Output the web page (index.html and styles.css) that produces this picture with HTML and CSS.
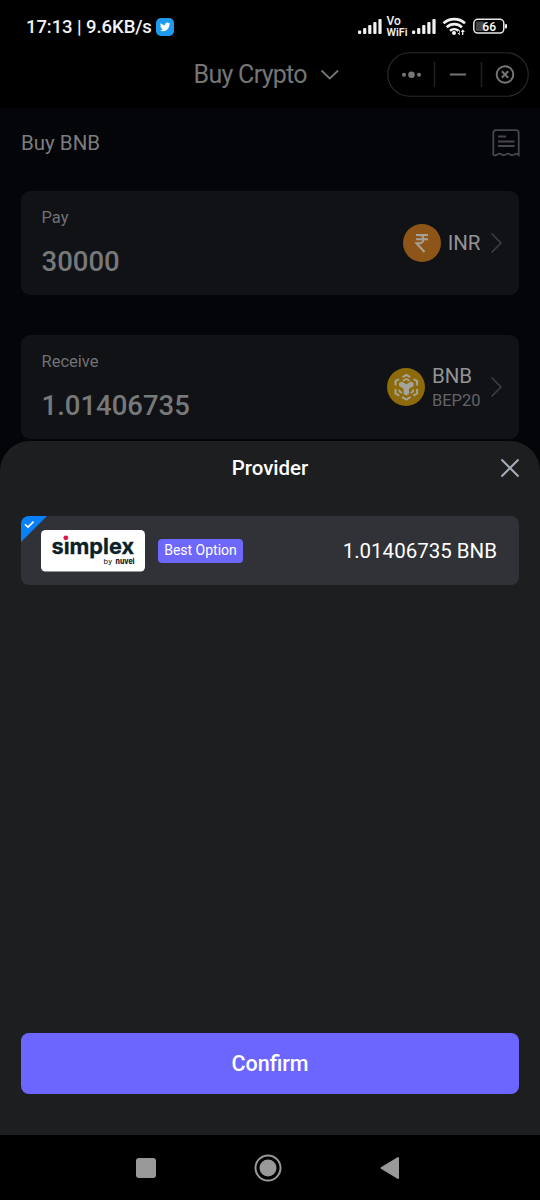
FILE: index.html
```html
<!DOCTYPE html>
<html lang="en">
<head>
<meta charset="utf-8">
<title>Buy Crypto</title>
<link rel="stylesheet" href="styles.css">
</head>
<body>
<div class="screen">
  <header class="status">
    <span class="clock">17:13 | 9.6KB/s</span>
    <svg class="bird" width="18" height="18" viewBox="0 0 18 18"><rect width="18" height="18" rx="5" fill="#1d9bf0"/><path transform="translate(4 3.500) scale(.44)" fill="#fff" d="M23.600 4.900c-.9.400-1.800.600-2.800.8 1-.6 1.800-1.600 2.100-2.700-.9.600-2 1-3.100 1.200a4.900 4.900 0 0 0-8.400 4.500C7.400 8.500 3.700 6.500 1.300 3.500a4.900 4.900 0 0 0 1.500 6.500c-.8 0-1.600-.2-2.200-.6 0 2.300 1.600 4.400 3.900 4.900-.7.200-1.500.2-2.200.1.600 2 2.400 3.400 4.600 3.400A9.900 9.900 0 0 1-.4 19.800a14 14 0 0 0 7.500 2.200c9.100 0 14.300-7.700 14-14.600 1-.7 1.800-1.600 2.500-2.500z"/></svg>
    <svg class="signals" width="150" height="26" viewBox="0 -2 150 26" fill="#f2f2f2">
      <g id="bars"><rect x="0" y="14.500" width="3.200" height="3.500" rx="1"/><rect x="5.100" y="12" width="3.200" height="6" rx="1"/><rect x="10.200" y="9" width="3.200" height="9" rx="1"/><rect x="15.300" y="6" width="3.200" height="12" rx="1"/><rect x="20.400" y="3" width="3.200" height="15" rx="1"/></g>
      <text class="vo" x="28.500" y="9">Vo</text><text class="wifi" x="28.500" y="19.500" textLength="21" lengthAdjust="spacingAndGlyphs">WiFi</text>
      <use href="#bars" x="54"/>
      <g fill="none" stroke="#f2f2f2" stroke-width="2.600"><path d="M85.500 7.300a16 16 0 0 1 21.500 0M88.700 11.200a11 11 0 0 1 15.200 0M92 14.800a6.500 6.500 0 0 1 8.500 0"/></g>
      <circle cx="96" cy="17" r="2"/><path d="M101 14v3h-1.500l2.200 2.500V14zM104 19v-3h-1.200l2-2.700 2 2.700h-1.500v3z"/>
      <rect x="115.800" y="3.300" width="30" height="13.800" rx="4" fill="none" stroke="#e8e8e8" stroke-width="1.500"/>
      <rect x="118" y="5.500" width="8" height="9.500" rx="1" fill="#444"/><rect x="147" y="8" width="2" height="4.500" rx="1"/>
      <text class="battery" x="124.300" y="14.500">66</text>
    </svg>
  </header>
  <div class="appbar">
    <h1>Buy Crypto</h1>
    <svg class="down" width="20" height="12" viewBox="0 0 20 12"><path d="m1.500 1.500 8.300 8 8.300-8"/></svg>
    <svg class="capsule" width="142" height="45" viewBox="0 0 142 45">
      <rect x=".75" y=".75" width="140.500" height="43.500" rx="21.700" fill="none" stroke="#292929" stroke-width="1.200"/>
      <path d="M47.500 10v25M94.500 10v25" stroke="#202020" stroke-width="1.500"/>
      <g fill="#777"><circle cx="17" cy="22.700" r="2"/><circle cx="24.500" cy="22.700" r="3.300"/><circle cx="32" cy="22.700" r="2"/></g>
      <g fill="none" stroke="#757575" stroke-width="2"><path d="M63 22.500h16"/><circle cx="118" cy="22.500" r="8.300"/><path d="m114.800 19.300 6.400 6.400m0-6.400-6.400 6.400"/></g>
    </svg>
  </div>
  <main class="content">
    <div class="heading"><h2>Buy BNB</h2>
      <svg width="28" height="28" viewBox="0 0 28 28"><path d="M1.300 26V4Q1.300 1.200 4 1.200h20q2.700 0 2.700 2.800v22q-2.200-2-4.300-.6-2 1.500-4.200 0-2.200-1.500-4.300 0-2 1.500-4.200 0-2.200-1.500-4.300 0-2 1.300-4.300.6zM6 7.500h8M6 12.500h16.500M6 17h16.500"/></svg>
    </div>
    <section class="amount">
      <div><p>Pay</p><strong>30000</strong></div>
      <div class="asset"><svg width="38" height="38" viewBox="0 0 38 38"><circle cx="19" cy="19" r="19" fill="#8e5518"/><path d="M13 11h12M13 15.200h12M13.500 11h2.500c6 0 6 8.300 0 8.300h-2.500L21.500 28" fill="none" stroke="#a8a19a" stroke-width="2"/></svg>
        <div class="currency"><b>INR</b></div><svg class="right" width="13" height="22" viewBox="0 0 13 22"><path d="m1.500 1.500 9.500 9.500-9.500 9.500"/></svg></div>
    </section>
    <section class="amount receive">
      <div><p>Receive</p><strong>1.01406735</strong></div>
      <div class="asset"><svg width="38" height="38" viewBox="0 0 38 38"><circle cx="19" cy="19" r="19" fill="#8d6b0a"/><g fill="none" stroke="#a5a39b" stroke-width="2"><path d="m15.500 9.200 3.800-2.200 3.800 2.200M12 11.200l-3.500 2v4.300M26.600 11.200l3.500 2v4.300M8.500 21v4.500l3.800 2.200M30.100 21v4.500l-3.800 2.200M15 29l4.300 2.500L23.600 29"/><path d="m16 12.800 3.300-1.800 3.300 1.800M12.500 21.500v2l2.500 1.500M26.100 21.500v2L23.600 25" stroke-width="1.700"/></g><path d="m12 15 2.700-1.500 4.600 2.700 4.600-2.700 2.700 1.500v3l-4.600 2.700v5.400l-2.700 1.500-2.700-1.500v-5.400L12 18z" fill="#a5a39b"/></svg>
        <div class="currency network"><b>BNB</b><small>BEP20</small></div><svg class="right" width="13" height="22" viewBox="0 0 13 22"><path d="m1.500 1.500 9.500 9.500-9.500 9.500"/></svg></div>
    </section>
  </main>
  <section class="sheet">
    <div class="sheet-title"><h3>Provider</h3><svg class="close" width="20" height="20" viewBox="0 0 20 20"><path d="m1.500 1.500 17 17m0-17-17 17"/></svg></div>
    <div class="provider">
      <svg class="check" width="26" height="26" viewBox="0 0 26 26"><path d="M0 0h26L0 26z" fill="#0880f8"/><path d="m4 8.300 3 2.800 5.500-5.500" fill="none" stroke="#fff" stroke-width="1.700"/></svg>
      <svg class="logo" width="104" height="42" viewBox="0 0 104 42"><rect width="104" height="41.500" rx="4.500" fill="#fff"/><text class="simplex" x="10.500" y="24" textLength="82.500" lengthAdjust="spacingAndGlyphs">sımplex</text><circle cx="24.800" cy="7.800" r="2.400" fill="#dc1648"/><text class="by" x="62.500" y="34" textLength="8.500">by</text><text class="nuvei" x="74.500" y="34" textLength="19" lengthAdjust="spacingAndGlyphs">nuveı</text><circle cx="92.400" cy="28.200" r=".8" fill="#dc1648"/></svg>
      <span class="tag">Best Option</span><span class="quote">1.01406735 BNB</span>
    </div>
    <button class="confirm">Confirm</button>
  </section>
  <nav><svg width="20" height="20" viewBox="0 0 20 20"><rect width="20" height="20" rx="3" fill="#999"/></svg><svg width="28" height="28" viewBox="0 0 28 28"><circle cx="14" cy="14" r="12.500" fill="none" stroke="#999" stroke-width="2"/><circle cx="14" cy="14" r="8.500" fill="#999"/></svg><svg width="20" height="24" viewBox="0 0 20 24"><path d="M1.500 12 18 2v20z" fill="#999" stroke="#999" stroke-width="2" stroke-linejoin="round"/></svg></nav>
</div>
</body>
</html>
```
FILE: styles.css
```css
* { box-sizing: border-box; margin: 0; }
body { margin: 0; background: #000; font-family: Roboto, sans-serif; }
svg { display: block; flex: none; }
.screen { position: relative; width: 540px; height: 1200px; display: flex; flex-direction: column; background: #000; overflow: hidden; }
.status { height: 52px; display: flex; align-items: center; padding: 1px 32px 0 26px; }
.clock { width: 130px; font-size: 18.5px; font-weight: 500; letter-spacing: -.08px; color: #f2f2f2; white-space: nowrap; }
.signals { margin-left: auto; }
.vo { font-size: 12px; font-weight: 500; }
.wifi { font-size: 10px; font-weight: 600; }
.battery { font-size: 12px; font-weight: 600; }
.appbar { height: 56px; display: flex; align-items: flex-start; padding-left: 193.5px; }
.appbar h1 { width: 126px; padding-top: 1px; font-size: 25px; line-height: 44px; font-weight: 400; letter-spacing: -.7px; color: #757575; white-space: nowrap; }
.down { margin-top: 17px; fill: none; stroke: #757575; stroke-width: 1.8; }
.capsule { margin-left: 47.5px; }
.content { flex: 1; background: #040508; padding: 0 21px; }
.heading { height: 83px; display: flex; justify-content: space-between; align-items: flex-start; padding-top: 21px; }
.heading h2 { font-size: 20.5px; line-height: 28px; font-weight: 400; color: #7c7c7e; }
.heading svg { margin-right: -.5px; fill: none; stroke: #46464c; stroke-width: 1.8; }
.amount { height: 104px; border-radius: 9px; background: #111216; display: flex; justify-content: space-between; padding: 15px 16.5px 0 20.5px; }
.receive { margin-top: 40px; }
.amount p { font-size: 16.5px; line-height: 24px; color: #707174; }
.amount strong { display: block; margin-top: 14px; font-size: 27.5px; line-height: 36px; font-weight: 500; color: #77787a; }
.asset { height: 74px; display: flex; align-items: center; }
.currency { display: flex; flex-direction: column; margin: 0 9px 0 7px; }
.currency b { font-size: 20.5px; line-height: 25px; font-weight: 400; color: #929294; }
.currency small { font-size: 16.5px; line-height: 23px; color: #626367; }
.network { padding-top: 2px; }
.right { fill: none; stroke: #3a3b40; stroke-width: 1.7; }
.sheet { position: absolute; top: 441px; left: 0; width: 540px; height: 694px; border-radius: 30px 30px 0 0; background: #1d1e20; padding: 0 21px; display: flex; flex-direction: column; }
.sheet-title { height: 75px; display: grid; grid-template-columns: 1fr auto 1fr; align-items: start; padding-top: 13px; }
.sheet-title h3 { grid-column: 2; font-size: 20.5px; line-height: 28px; font-weight: 500; color: #fff; }
.close { justify-self: end; margin: 4px -.5px 0 0; fill: none; stroke: #a6acb9; stroke-width: 2; }
.provider { position: relative; height: 69px; border-radius: 8px; background: #303237; display: flex; align-items: center; padding: 0 22px 0 20px; overflow: hidden; }
.check { position: absolute; top: 0; left: 0; }
.simplex { font-family: Inter, sans-serif; font-size: 22px; font-weight: 700; fill: #0b2027; stroke: #0b2027; stroke-width: .3; }
.by { font-size: 8px; fill: #0b2027; }
.nuvei { font-family: Inter, sans-serif; font-size: 7.5px; font-weight: 800; fill: #0b2027; }
.tag { width: 85px; height: 24px; margin-left: 13px; border-radius: 4px; background: #6e67fc; color: #fff; font-size: 14px; line-height: 23px; text-align: center; white-space: nowrap; }
.quote { margin-left: auto; font-size: 20.5px; color: #fff; }
.confirm { margin-top: auto; margin-bottom: 41px; height: 61px; border: 0; border-radius: 8px; background: #6c66ff; color: #fff; font: 500 21.5px/61px Roboto, sans-serif; padding: 0; }
nav { height: 65px; display: flex; align-items: center; justify-content: space-between; padding: 0 140px 0 136px; background: #000; }
```
